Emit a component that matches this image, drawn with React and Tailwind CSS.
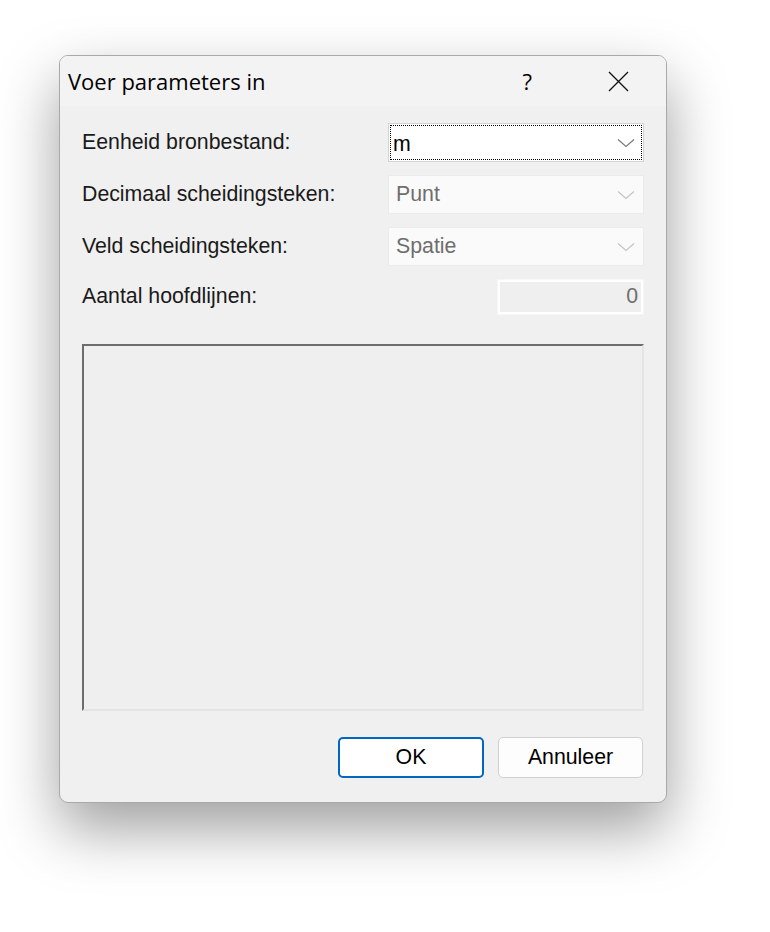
const Chevron = ({ color }) => (
  <svg width="18" height="10" viewBox="0 0 18 10" fill="none" stroke={color} strokeWidth="1.2">
    <path d="M1 1.5 L9 8.5 L17 1.5" />
  </svg>
);

const Combo = ({ value, focused }) => {
  if (focused) {
    return (
      <div className="w-[256px] h-[39px] bg-white border border-[#d4d4d4] p-[1px]">
        <div className="h-full border border-dotted border-black flex items-center justify-between pl-[2px] pr-[6px]">
          <span className="text-[21.3px] text-black leading-none pt-[5px]">{value}</span>
          <Chevron color="#7a7a7a" />
        </div>
      </div>
    );
  }
  return (
    <div className="w-[256px] h-[39px] bg-[#fafafa] border border-[#ebebeb] flex items-center justify-between pl-[7px] pr-[8px]">
      <span className="text-[21.3px] text-[#6e6e6e] leading-none">{value}</span>
      <Chevron color="#c4c4c4" />
    </div>
  );
};

const Row = ({ label, children }) => (
  <div className="flex items-center justify-between h-[39px]">
    <span className="text-[21.3px] text-[#1a1a1a] leading-none">{label}</span>
    {children}
  </div>
);

export default function App() {
  return (
    <div className="w-[770px] h-[932px] bg-white pt-[55px] pl-[59px] font-['Liberation_Sans']">
      <div className="w-[608px] h-[748px] bg-[#f0f0f0] border border-[#a9a9a9] rounded-[9px] shadow-[0_26px_60px_rgba(0,0,0,0.38)] flex flex-col overflow-hidden">
        {/* title bar */}
        <div className="h-[50px] bg-[#f3f3f3] flex items-center pl-[8px] pr-[37px]">
          <span className="flex-1 text-[22px] text-black font-['Open_Sans'] pt-[1px]">Voer parameters in</span>
          <span className="text-[22px] text-black font-['Open_Sans'] mr-[76px]">?</span>
          <svg width="21" height="21" viewBox="0 0 21 21" stroke="#111" strokeWidth="1.3">
            <path d="M1 1 L20 20 M20 1 L1 20" />
          </svg>
        </div>

        <div className="flex flex-col px-[22px] pt-[17px] font-['Liberation_Sans']">
          <div className="flex flex-col gap-[13px]">
            <Row label="Eenheid bronbestand:">
              <Combo value="m" focused />
            </Row>
            <Row label="Decimaal scheidingsteken:">
              <Combo value="Punt" />
            </Row>
            <Row label="Veld scheidingsteken:">
              <Combo value="Spatie" />
            </Row>
            <div className="flex items-center justify-between h-[36px]">
              <span className="text-[21.3px] text-[#1a1a1a] leading-none">Aantal hoofdlijnen:</span>
              <div className="w-[147px] h-[36px] border border-[#f6f6f6]">
                <div className="h-full border-2 border-white bg-[#efefef] flex items-center justify-end pr-[3px]">
                  <span className="text-[21.3px] text-[#6e6e6e] leading-none">0</span>
                </div>
              </div>
            </div>
          </div>

          <div className="mt-[29px] h-[367px] border-t-2 border-l-2 border-t-[#6d6d6d] border-l-[#6d6d6d] border-r-2 border-b-2 border-r-[#e4e4e4] border-b-[#e4e4e4] bg-[#efefef]" />

          <div className="flex justify-end gap-[14px] mt-[26px] pr-[1px]">
            <button className="w-[146px] h-[41px] bg-white border-2 border-[#0067c0] rounded-[5px] text-[21.3px] text-black leading-none font-['Liberation_Sans']">
              OK
            </button>
            <button className="w-[145px] h-[41px] bg-[#fdfdfd] border border-[#d0d0d0] rounded-[5px] text-[21.3px] text-black leading-none font-['Liberation_Sans']">
              Annuleer
            </button>
          </div>
        </div>
      </div>
    </div>
  );
}
